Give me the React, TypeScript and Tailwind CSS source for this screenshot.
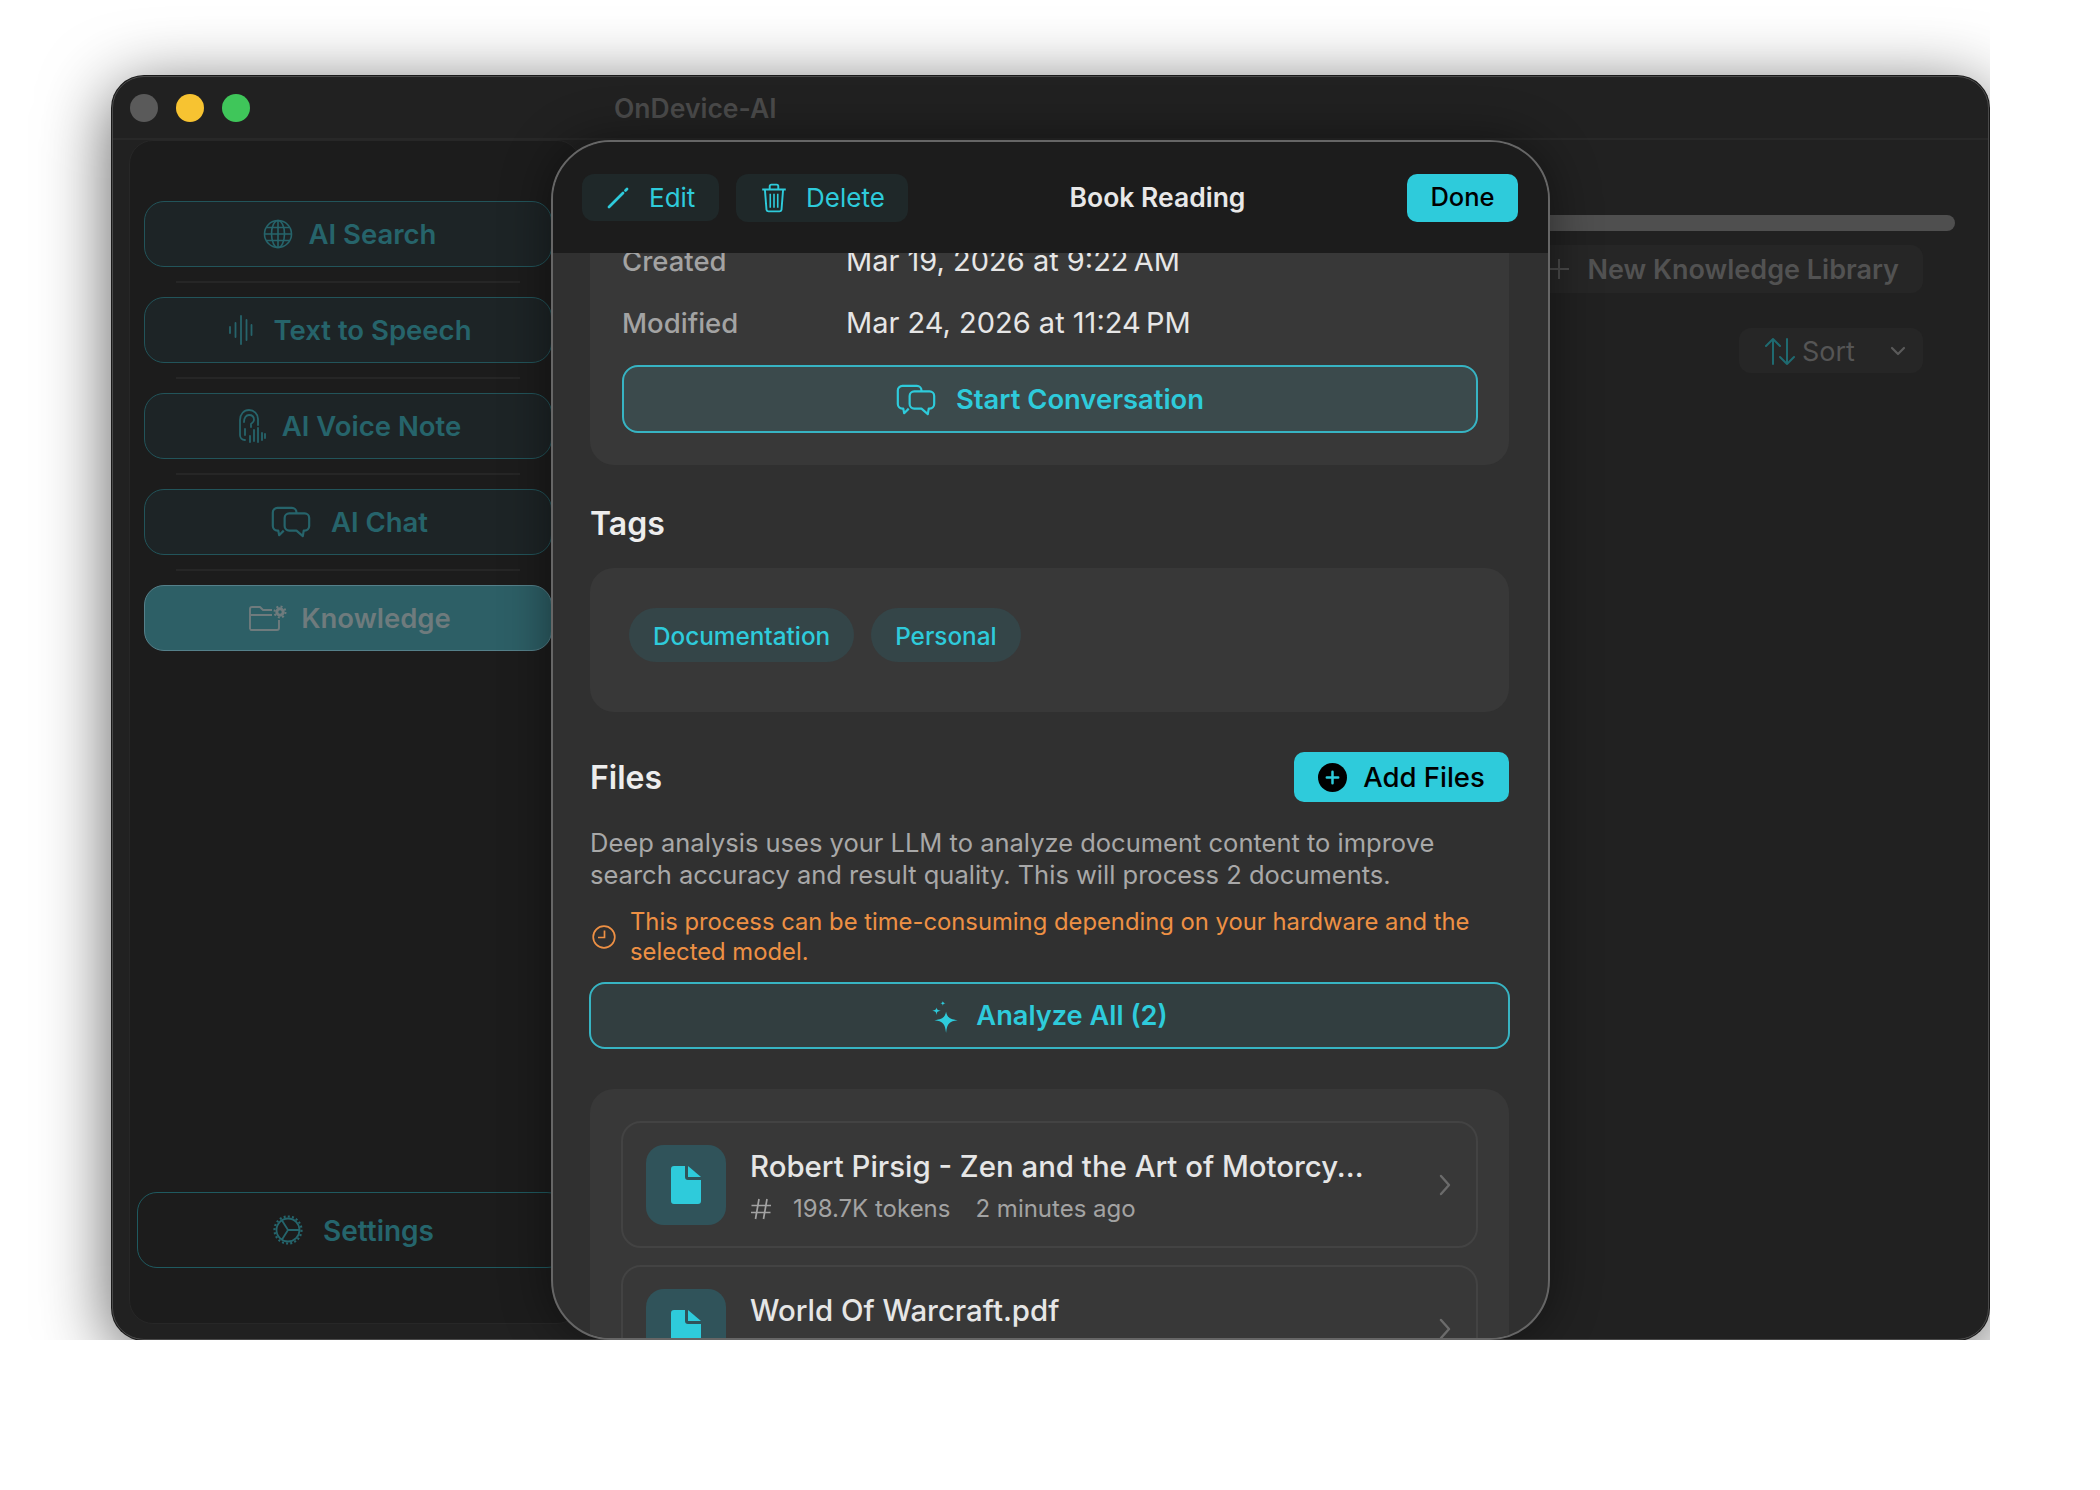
import type { ReactNode } from "react";

function GlobeIcon() {
  return (
    <svg width="30" height="30" viewBox="0 0 30 30" fill="none" stroke="currentColor" strokeWidth="1.6">
      <circle cx="15" cy="15" r="13.5" />
      <ellipse cx="15" cy="15" rx="6.5" ry="13.5" />
      <path d="M15 1.5v27M1.5 15h27M3.5 8.5h23M3.5 21.5h23" />
    </svg>
  );
}

function WaveIcon() {
  return (
    <svg width="28" height="30" viewBox="0 0 28 30" fill="none" stroke="currentColor" strokeWidth="1.8" strokeLinecap="round">
      <path d="M2 12v6M7.500 8v14M13 1v28M18.500 5v20M23.500 10v10" />
    </svg>
  );
}

function EarIcon() {
  return (
    <svg width="28" height="34" viewBox="0 0 28 34" fill="none" stroke="currentColor" strokeWidth="1.8" strokeLinecap="round">
      <path d="M7 31c-3 0-5-2-5-5V11C2 5 6 1 11 1s9 4 9 9v6" />
      <path d="M6 13c0-4 2-7 5-7s5 2 5 5c0 2-1.500 3-3 4v3" />
      <path d="M7 26v-6M12 33v-6M16 32V21M20 33V19M24 31v-7M27 29v-4" />
    </svg>
  );
}

function ChatIcon({ size = 40 }: { size?: number }) {
  return (
    <svg width={size} height={size * 0.8} viewBox="0 0 44 35" fill="none" stroke="currentColor" strokeWidth="2.400" strokeLinejoin="round">
      <path d="M14 27l-5 5-1-5H7a5 5 0 0 1-5-5V7a5 5 0 0 1 5-5h16a5 5 0 0 1 5 5v1" />
      <path d="M20 8h17a5 5 0 0 1 5 5v9a5 5 0 0 1-5 5h-1l-1 6-7-6h-8a5 5 0 0 1-5-5v-9a5 5 0 0 1 5-5z" />
    </svg>
  );
}

function FolderGearIcon() {
  return (
    <svg width="38" height="26" viewBox="0 0 38 26" fill="none" stroke="currentColor" strokeWidth="1.900" strokeLinejoin="round">
      <path d="M1 24V4a2 2 0 0 1 2-2h8l3 3h9M1 10h22M30 15v8a2 2 0 0 1-2 2H3a2 2 0 0 1-2-1" />
      <circle cx="31" cy="7" r="3.200" strokeWidth="3" />
      <circle cx="31" cy="7" r="5.500" strokeWidth="2" strokeDasharray="2 2.300" />
    </svg>
  );
}

function GearIcon() {
  return (
    <svg width="30" height="30" viewBox="0 0 30 30" fill="none" stroke="currentColor">
      <circle cx="15" cy="15" r="11.500" strokeWidth="1.800" />
      <circle cx="15" cy="15" r="13.500" strokeWidth="2.200" strokeDasharray="2 2.200" />
      <path d="M15 15L9 5.500M15 15L9 24.500M15 15h11" strokeWidth="1.800" />
    </svg>
  );
}

function PencilIcon() {
  return (
    <svg width="22" height="22" viewBox="0 0 22 22" fill="none" stroke="currentColor" strokeLinecap="round">
      <path d="M2 20L16 6" strokeWidth="2.800" />
      <path d="M18.500 3.500L20 2" strokeWidth="2.800" />
    </svg>
  );
}

function TrashIcon() {
  return (
    <svg width="26" height="30" viewBox="0 0 24 28" fill="none" stroke="currentColor" strokeWidth="1.800" strokeLinejoin="round">
      <path d="M1 6h22M8 6V3a1.500 1.500 0 0 1 1.500-1.500h5A1.500 1.500 0 0 1 16 3v3" />
      <path d="M3.500 6l1.500 19a2 2 0 0 0 2 1.500h10a2 2 0 0 0 2-1.500L20.500 6" />
      <path d="M8.500 10v13M12 10v13M15.500 10v13" strokeWidth="1.500" />
    </svg>
  );
}

function SparkIcon() {
  return (
    <svg width="28" height="34" viewBox="0 0 26 32" fill="currentColor">
      <path d="M14 11c1 5 3 7 11 8-8 1-10 3-11 12-1-9-3-11-11-12 8-1 10-3 11-8z" />
      <path d="M5 7c.4 2 1 2.700 4 3-3 .4-3.600 1-4 4-.4-3-1-3.600-4-4 3-.3 3.600-1 4-3z" />
      <path d="M11 1c.2 1.300.7 1.800 2.500 2-1.800.2-2.300.7-2.500 2.500C10.800 3.700 10.300 3.200 8.500 3c1.800-.2 2.300-.7 2.500-2z" />
    </svg>
  );
}

function ClockIcon() {
  return (
    <svg className="ml-[2px]" width="24" height="24" viewBox="0 0 24 24" fill="none" stroke="currentColor" strokeWidth="1.700">
      <circle cx="12" cy="12" r="10.800" />
      <path d="M12.500 5.500V12.500H6" />
    </svg>
  );
}

function PlusDotIcon() {
  return (
    <svg width="29" height="29" viewBox="0 0 28 28">
      <circle cx="14" cy="14" r="14" fill="#000" />
      <path d="M14 8.500v11M8.500 14h11" stroke="#2ecbdb" strokeWidth="2.400" strokeLinecap="round" />
    </svg>
  );
}

function DocIcon() {
  return (
    <svg width="30" height="38" viewBox="0 0 30 38" fill="#2ecbdb">
      <path d="M3 0h11v11a3 3 0 0 0 3 3h13v21a3 3 0 0 1-3 3H3a3 3 0 0 1-3-3V3a3 3 0 0 1 3-3z" />
      <path d="M17 0l13 11H17z" />
    </svg>
  );
}

function HashIcon() {
  return (
    <svg width="22" height="22" viewBox="0 0 22 22" fill="none" stroke="currentColor" strokeWidth="1.700">
      <path d="M9 1L5.500 21M17 1l-3.500 20M1.500 7.500h19.500M1 14.500h19.500" />
    </svg>
  );
}

function ChevronIcon() {
  return (
    <svg width="14" height="22" viewBox="0 0 14 22" fill="none" stroke="#6b6b6b" strokeWidth="2.400" strokeLinecap="round" strokeLinejoin="round">
      <path d="M3 2l8 9-8 9" />
    </svg>
  );
}

function NavButton({ icon, label, gap }: { icon: ReactNode; label: string; gap: string }) {
  return (
    <div className={`flex h-[66px] w-[408px] items-center justify-center rounded-[20px] border border-[#22545a] bg-[#1d2426] pl-[3px] text-[27.5px] font-semibold text-[#26646b] ${gap}`}>
      {icon}
      <span className="pt-[1px]">{label}</span>
    </div>
  );
}

function Divider() {
  return <div className="mx-[32px] my-[14px] h-[2px] w-[344px] bg-[#262626]" />;
}

function FileRow({ name, meta }: { name: string; meta?: boolean }) {
  return (
    <div className="flex h-[127px] shrink-0 items-center rounded-[20px] border-2 border-[#434343] pl-[23px] pr-[24px]">
      <div className="flex h-[80px] w-[80px] shrink-0 items-center justify-center rounded-[18px] bg-[#30535a]">
        <DocIcon />
      </div>
      <div className="ml-[24px] flex-1 pt-[3px]">
        <div className="text-[29.4px] font-medium leading-[38px] text-[#e6e6e6]">{name}</div>
        {meta ? (
          <div className="mt-[7px] flex h-[32px] items-center text-[24px] leading-[32px] text-[#a3a3a3]">
            <HashIcon />
            <span className="ml-[21px]">198.7K tokens</span>
            <span className="ml-[25px]">2 minutes ago</span>
          </div>
        ) : (
          <div className="mt-[7px] h-[32px]" />
        )}
      </div>
      <ChevronIcon />
    </div>
  );
}

export default function App() {
  return (
    <div className="h-[1490px] w-[2100px] bg-white font-[Inter,sans-serif]">
      <div className="h-[1340px] w-[1990px] overflow-hidden pl-[112px] pt-[76px]">
        <div className="relative flex h-[1264px] w-[1877px] flex-col rounded-[32px] border border-[#4a4a4a] bg-[#212121] shadow-[0_0_0_1px_#1a1a1a,0_14px_70px_rgba(0,0,0,0.65)]">
          <div className="flex h-[63px] shrink-0 items-center border-b-2 border-[#282828] pl-[17px]">
            <div className="h-[28px] w-[28px] rounded-full bg-[#5a5a5a]" />
            <div className="ml-[18px] h-[28px] w-[28px] rounded-full bg-[#f7c331]" />
            <div className="ml-[18px] h-[28px] w-[28px] rounded-full bg-[#3fc65a]" />
            <div className="ml-[364px] pt-[2px] text-[26.5px] font-semibold text-[#4b4b4b]">OnDevice-AI</div>
          </div>

          <div className="flex min-h-0 flex-1 pb-[15px] pl-[16px]">
            <div className="flex w-[452px] shrink-0 flex-col rounded-[24px] border border-[#272727] bg-[#1c1c1c] pb-[55px] pl-[14px] pt-[60px]">
              <NavButton icon={<GlobeIcon />} label="AI Search" gap="gap-[16px]" />
              <Divider />
              <NavButton icon={<WaveIcon />} label="Text to Speech" gap="gap-[18px]" />
              <Divider />
              <NavButton icon={<EarIcon />} label="AI Voice Note" gap="gap-[16px]" />
              <Divider />
              <NavButton icon={<ChatIcon />} label="AI Chat" gap="gap-[20px]" />
              <Divider />
              <div className="flex h-[66px] w-[408px] items-center justify-center gap-[14px] rounded-[20px] border border-[#55808a] bg-[#2d5f66] pl-[4px] text-[27.5px] font-semibold text-[#6f7b7d]">
                <FolderGearIcon />
                <span className="pt-[1px]">Knowledge</span>
              </div>
              <div className="-ml-[7px] mt-auto flex h-[76px] w-[430px] items-center justify-center gap-[20px] rounded-[20px] border border-[#1f5a60] pl-[3px] text-[28px] font-semibold text-[#25656c]">
                <GearIcon />
                <span className="pt-[1px]">Settings</span>
              </div>
            </div>

            <div className="flex min-w-0 flex-1 flex-col pr-[33px] pt-[75px]">
              <div className="h-[16px] rounded-full bg-[#4f4f4f]" />
              <div className="mr-[32px] mt-[14px] flex h-[48px] items-center self-end rounded-[12px] bg-[#262626] pl-[10px] pr-[24px] text-[27px] font-semibold text-[#525252]">
                <svg className="mr-[18px]" width="22" height="22" viewBox="0 0 22 22" fill="none" stroke="#4a4a4a" strokeWidth="2">
                  <path d="M11 1v20M1 11h20" />
                </svg>
                <span className="pt-[2px]">New Knowledge Library</span>
              </div>
              <div className="mr-[32px] mt-[35px] flex h-[45px] w-[184px] items-center self-end rounded-[12px] bg-[#262626] pl-[25px] text-[27px] text-[#555555]">
                <svg width="32" height="28" viewBox="0 0 32 28" fill="none" stroke="#1f6a70" strokeWidth="2" strokeLinecap="round" strokeLinejoin="round">
                  <path d="M9 27V2M2 9l7-7 7 7M23 2v25M16 20l7 7 7-7" />
                </svg>
                <span className="ml-[6px] pt-[3px]">Sort</span>
                <svg className="ml-auto mr-[17px]" width="16" height="10" viewBox="0 0 16 10" fill="none" stroke="#5a5a5a" strokeWidth="2.200" strokeLinecap="round" strokeLinejoin="round">
                  <path d="M2 2l6 6 6-6" />
                </svg>
              </div>
            </div>
          </div>

          {/* sheet lying over the dimmed window */}
          <div className="absolute left-[438px] top-[63px] flex h-[1200px] w-[999px] flex-col overflow-hidden rounded-[60px] border-2 border-[#666666] bg-[#303030] shadow-[0_0_50px_rgba(0,0,0,0.45)]">
            <div className="z-10 flex h-[111px] shrink-0 items-center bg-[#1c1c1c] pl-[29px] pr-[30px]">
              <div className="flex h-[47px] w-[137px] items-center gap-[20px] rounded-[12px] bg-[#1f2829] pl-[25px] text-[26px] text-[#2ecbdb]">
                <PencilIcon />
                <span>Edit</span>
              </div>
              <div className="ml-[17px] flex h-[48px] w-[172px] items-center gap-[19px] rounded-[12px] bg-[#1f2829] pl-[25px] text-[26px] text-[#2ecbdb]">
                <TrashIcon />
                <span>Delete</span>
              </div>
              <div className="flex-1 text-center text-[26.5px] font-semibold text-[#e8e8e8]">Book Reading</div>
              <div className="flex h-[48px] w-[111px] items-center justify-center rounded-[10px] bg-[#2ecbdb] text-[25.5px] font-medium text-black">
                Done
              </div>
            </div>

            <div className="min-h-0 flex-1 overflow-hidden pl-[37px] pr-[39px]">
              <div className="-mt-[8px] rounded-b-[24px] bg-[#383838] pb-[32px] pl-[32px] pr-[31px]">
                <div className="flex font-medium leading-[32px]">
                  <span className="w-[224px] text-[27.5px] text-[#a3a3a3]">Created</span>
                  <span className="text-[29px] font-normal text-[#e6e6e6]">Mar 19, 2026 at 9:22{"\u202f"}AM</span>
                </div>
                <div className="mt-[30px] flex font-medium leading-[32px]">
                  <span className="w-[224px] text-[27.5px] text-[#a3a3a3]">Modified</span>
                  <span className="text-[29px] font-normal text-[#e6e6e6]">Mar 24, 2026 at 11:24{"\u202f"}PM</span>
                </div>
                <div className="mt-[26px] flex h-[68px] items-center justify-center gap-[20px] rounded-[16px] border-2 border-[#37b4c3] bg-[#3b4a4c] pt-[2px] text-[27.4px] font-semibold text-[#2ecbdb]">
                  <ChatIcon />
                  <span>Start Conversation</span>
                </div>
              </div>

              <div className="mt-[39px] text-[32px] font-semibold leading-[40px] text-[#ededed]">Tags</div>
              <div className="mt-[24px] flex h-[144px] gap-[17px] rounded-[24px] bg-[#383838] pl-[39px] pt-[40px]">
                <div className="flex h-[54px] items-center rounded-full bg-[#344548] px-[24px] pt-[3px] text-[24.3px] font-medium text-[#2ecbdb]">Documentation</div>
                <div className="flex h-[54px] items-center rounded-full bg-[#344548] px-[24px] pt-[3px] text-[24.3px] font-medium text-[#2ecbdb]">Personal</div>
              </div>

              <div className="mt-[40px] flex h-[50px] items-center justify-between">
                <span className="pt-[2px] text-[32px] font-semibold text-[#ededed]">Files</span>
                <div className="flex h-[50px] w-[215px] items-center justify-center gap-[16px] rounded-[10px] bg-[#2ecbdb] text-[27.5px] font-medium text-black">
                  <PlusDotIcon />
                  <span className="pt-[2px]">Add Files</span>
                </div>
              </div>
              <p className="mt-[25px] text-[25.5px] leading-[32px] text-[#a8a8a8]">
                Deep analysis uses your LLM to analyze document content to improve
                <br />
                search accuracy and result quality. This will process 2 documents.
              </p>
              <div className="mt-[16px] flex items-center gap-[14px] text-[#ee9044]">
                <ClockIcon />
                <p className="text-[23.8px] leading-[30px]">
                  This process can be time-consuming depending on your hardware and the
                  <br />
                  selected model.
                </p>
              </div>
              <div className="-mx-[1px] mt-[15px] flex h-[67px] items-center justify-center gap-[17px] rounded-[16px] border-2 border-[#37b4c3] bg-[#323e40] pt-[2px] text-[27.2px] font-semibold text-[#2ecbdb]">
                <SparkIcon />
                <span>Analyze All (2)</span>
              </div>

              <div className="mt-[40px] flex flex-col gap-[17px] rounded-t-[24px] bg-[#383838] px-[31px] pt-[32px]">
                <FileRow name="Robert Pirsig - Zen and the Art of Motorcy..." meta />
                <FileRow name="World Of Warcraft.pdf" />
              </div>
            </div>
          </div>
        </div>
      </div>
    </div>
  );
}
